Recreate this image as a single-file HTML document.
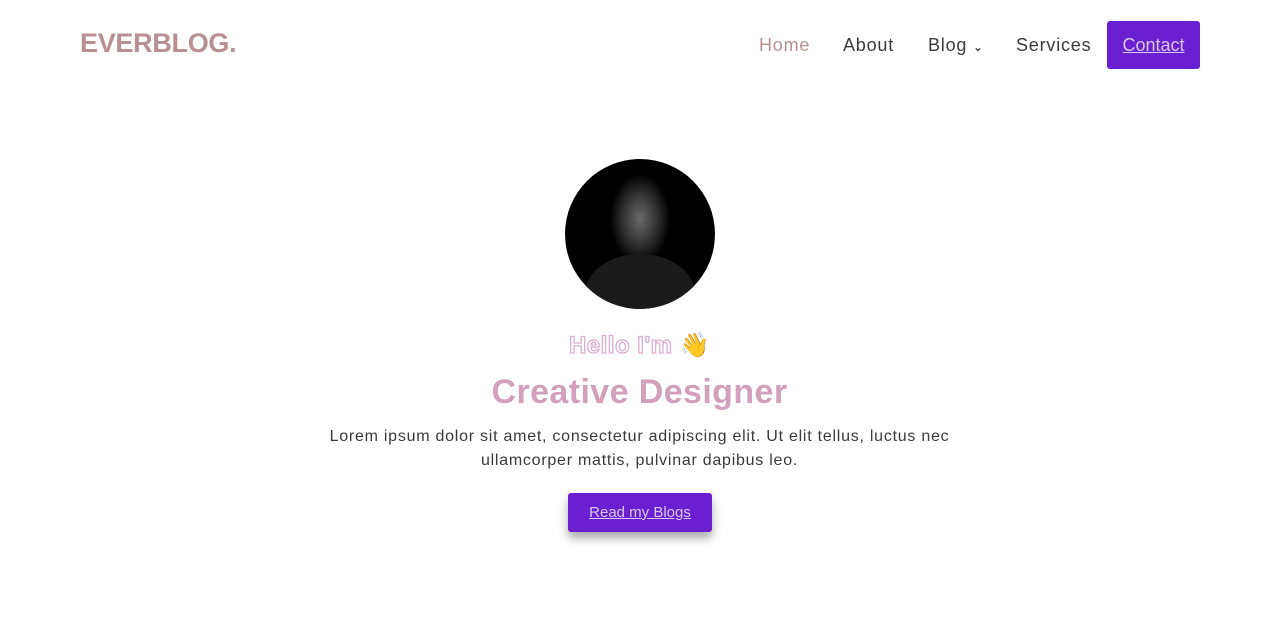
<!DOCTYPE html>
<html><head><meta charset="utf-8"><style>
*{margin:0;padding:0;box-sizing:border-box}
body{width:1279px;height:635px;background:#fff;font-family:"Liberation Sans","DejaVu Sans",sans-serif;position:relative;overflow:hidden}
.logo{position:absolute;left:80px;top:28px;font-size:27px;font-weight:bold;color:#b89092;letter-spacing:-0.3px}
.nav{position:absolute;top:35px;font-size:18px;color:#3a3a3a;letter-spacing:0.8px}
.btn{position:absolute;left:1107px;top:21px;width:93px;height:48px;background:#6a1fd1;border-radius:3px;color:#d8c8f0;font-size:18px;text-decoration:underline;text-align:center;line-height:48px}
.av{position:absolute;left:565px;top:159px;width:150px;height:150px;border-radius:50%;background:radial-gradient(ellipse 30px 45px at 75px 60px,#6a6a6a,#333 55%,#000 100%);overflow:hidden}
.av:after{content:"";position:absolute;left:20px;top:95px;width:110px;height:80px;border-radius:50% 50% 0 0;background:#1a1a1a}
.hello{position:absolute;left:0;width:1279px;top:331px;text-align:center;font-size:24px;font-weight:bold;color:#fff;-webkit-text-stroke:1.3px #dcaed0;letter-spacing:0.5px}
.h1{position:absolute;left:0;width:1279px;top:373px;text-align:center;font-size:34px;font-weight:bold;color:#d3a0bc;letter-spacing:0.4px}
.p{position:absolute;left:0;width:1279px;top:425px;text-align:center;font-size:16px;line-height:24px;color:#3a3a3a;letter-spacing:0.75px}
.rb{position:absolute;left:568px;top:493px;width:144px;height:39px;background:#6a1fd1;border-radius:3px;color:#d8c8f0;font-size:15px;text-decoration:underline;text-align:center;line-height:39px;box-shadow:0 6px 10px rgba(0,0,0,.35)}
</style></head><body>
<div class="logo">EVERBLOG.</div>
<div class="nav" style="left:759px;color:#b89092">Home</div>
<div class="nav" style="left:843px">About</div>
<div class="nav" style="left:928px">Blog <span style="font-size:12px;font-weight:bold">&#8964;</span></div>
<div class="nav" style="left:1016px">Services</div>
<div class="btn">Contact</div>
<div class="av"></div>
<div class="hello">Hello I'm <span style="-webkit-text-stroke:0;color:#f2c14e">👋</span></div>
<div class="h1">Creative Designer</div>
<div class="p">Lorem ipsum dolor sit amet, consectetur adipiscing elit. Ut elit tellus, luctus nec<br>ullamcorper mattis, pulvinar dapibus leo.</div>
<div class="rb">Read my Blogs</div>
</body></html>
